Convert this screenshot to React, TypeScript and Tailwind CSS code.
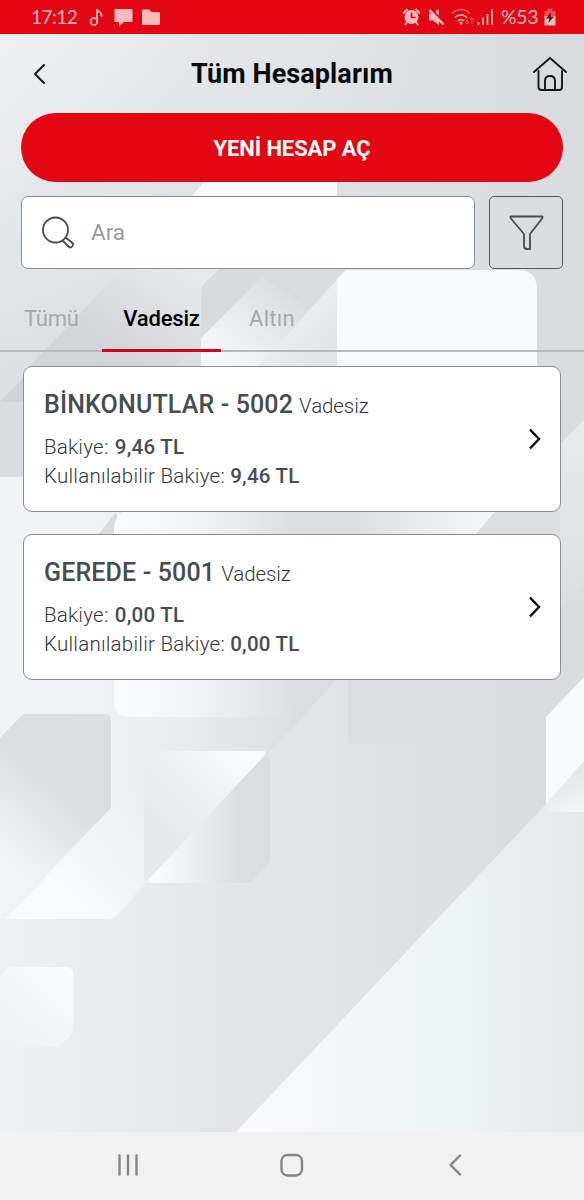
import type { ReactNode } from "react";

interface Account {
  name: string;
  type: string;
  balance: string;
  available: string;
}

const accounts: Account[] = [
  { name: "BİNKONUTLAR - 5002", type: "Vadesiz", balance: "9,46 TL", available: "9,46 TL" },
  { name: "GEREDE - 5001", type: "Vadesiz", balance: "0,00 TL", available: "0,00 TL" },
];

function Background() {
  return (
    <svg
      className="absolute inset-0 h-full w-full"
      viewBox="0 0 584 1200"
      preserveAspectRatio="none"
      aria-hidden="true"
    >
      <defs>
        <linearGradient id="base" x1="0" x2="1" y1="0" y2="0">
          <stop offset="0" stopColor="#eef1f3" />
          <stop offset="0.25" stopColor="#e6eaec" />
          <stop offset="0.6" stopColor="#dfe3e5" />
          <stop offset="0.95" stopColor="#d9dcdf" />
        </linearGradient>
        <linearGradient id="topShade" x1="0" x2="0" y1="0" y2="1">
          <stop offset="0" stopColor="#d9dddf" stopOpacity="0" />
          <stop offset="1" stopColor="#d9dddf" stopOpacity="0.9" />
        </linearGradient>
        <linearGradient id="leftGlow" gradientUnits="userSpaceOnUse" x1="60" x2="310" y1="0" y2="0">
          <stop offset="0" stopColor="#eff3f5" />
          <stop offset="0.35" stopColor="#ebeff1" />
          <stop offset="1" stopColor="#dadee0" />
        </linearGradient>
        <linearGradient id="triangle" gradientUnits="userSpaceOnUse" x1="236" x2="584" y1="0" y2="0">
          <stop offset="0" stopColor="#f9fafc" />
          <stop offset="0.6" stopColor="#eef3f5" />
          <stop offset="1" stopColor="#e5e8ea" />
        </linearGradient>
        <linearGradient id="whiteFade" gradientUnits="userSpaceOnUse" x1="114" x2="300" y1="0" y2="0">
          <stop offset="0" stopColor="#fafbfd" />
          <stop offset="0.4" stopColor="#f2f5f6" />
          <stop offset="1" stopColor="#dadee0" />
        </linearGradient>
        <linearGradient id="hex" gradientUnits="userSpaceOnUse" x1="62" y1="790" x2="5" y2="855">
          <stop offset="0" stopColor="#dadee0" />
          <stop offset="1" stopColor="#f0f4f5" />
        </linearGradient>
        <linearGradient id="strip" gradientUnits="userSpaceOnUse" x1="70" y1="890" x2="150" y2="810">
          <stop offset="0" stopColor="#f8fafb" />
          <stop offset="1" stopColor="#f0f4f6" stopOpacity="0" />
        </linearGradient>
        <linearGradient id="squareLight" gradientUnits="userSpaceOnUse" x1="250" y1="750" x2="165" y2="835">
          <stop offset="0" stopColor="#fbfcfd" />
          <stop offset="0.5" stopColor="#edf1f4" />
          <stop offset="1" stopColor="#e5e8ea" />
        </linearGradient>
        <linearGradient id="squareDark" gradientUnits="userSpaceOnUse" x1="155" x2="240" y1="0" y2="0">
          <stop offset="0" stopColor="#fafbfc" />
          <stop offset="1" stopColor="#dadee0" />
        </linearGradient>
        <linearGradient id="chip" x1="1" y1="0" x2="0.2" y2="1">
          <stop offset="0" stopColor="#fafbfc" />
          <stop offset="1" stopColor="#edf1f2" />
        </linearGradient>
        <linearGradient id="band" gradientUnits="userSpaceOnUse" x1="190" y1="270" x2="130" y2="360">
          <stop offset="0" stopColor="#e7eaec" />
          <stop offset="1" stopColor="#d3d6d9" />
        </linearGradient>
        <linearGradient id="ray" gradientUnits="userSpaceOnUse" x1="225" y1="366" x2="290" y2="290">
          <stop offset="0" stopColor="#f5f7f9" />
          <stop offset="0.5" stopColor="#e8ebed" />
          <stop offset="1" stopColor="#d9dddf" />
        </linearGradient>
        <linearGradient id="wing" gradientUnits="userSpaceOnUse" x1="270" y1="300" x2="337" y2="366">
          <stop offset="0" stopColor="#edf1f3" />
          <stop offset="1" stopColor="#dfe3e5" />
        </linearGradient>
        <linearGradient id="gap" gradientUnits="userSpaceOnUse" x1="346" x2="495" y1="0" y2="0">
          <stop offset="0" stopColor="#dadee0" />
          <stop offset="1" stopColor="#f5f8fa" />
        </linearGradient>
        <linearGradient id="edge" x1="0" x2="0" y1="0" y2="1">
          <stop offset="0" stopColor="#e8ebee" />
          <stop offset="1" stopColor="#dbdfe1" />
        </linearGradient>
        <linearGradient id="cornerLow" gradientUnits="userSpaceOnUse" x1="560" y1="780" x2="575" y2="812">
          <stop offset="0" stopColor="#e2e7e9" />
          <stop offset="1" stopColor="#f3f6f8" />
        </linearGradient>
      </defs>

      <rect width="584" height="1200" fill="url(#base)" />
      <rect y="34" width="584" height="368" fill="url(#topShade)" />

      {/* shapes behind the search field and the tabs */}
      <path d="M206 180H337V200H188Z" fill="#f7f9fb" />
      <path d="M123 268H220L201 287V340L175 368H28Z" fill="url(#band)" />
      <path d="M35 366H120V402H0Z" fill="#cfd3d6" />
      <path d="M0 402H60V477H0Z" fill="#d9dde0" />
      <path d="M201 287L220 268H350L250 366H201Z" fill="#d7dbdd" />
      <path d="M201 338L262 277L310 306L258 368H201Z" fill="url(#ray)" />
      <path d="M270 268H348L310 308Z" fill="#d9dddf" />
      <path d="M346 270L256 368H346Z" fill="url(#wing)" />
      <path d="M337 279L346 270H518Q537 270 537 290V380H337Z" fill="#f7f9fb" />

      {/* middle of the page */}
      <path d="M0 477H340V676L115 919H0Z" fill="url(#leftGlow)" />
      <path d="M116 512L98 535H120Z" fill="#d7dbdd" />
      <path d="M292 500H584V600H336V680L292 728Z" fill="#dadee0" />
      <path d="M114 527Q116 512 132 508H310V690L285 717H128Q114 715 114 701Z" fill="url(#whiteFade)" />
      <path d="M346 508H498L474 536H346Z" fill="url(#gap)" />
      <path d="M560 444L584 420V582L560 606Z" fill="url(#edge)" />
      <path d="M348 680H485L424 741Q421 744 416 744H353Q348 744 348 739Z" fill="#dadee0" />

      {/* lower shapes */}
      <path d="M236 1132L546 804L584 764V1132Z" fill="url(#triangle)" />
      <path d="M546 717L584 677V764L546 804Z" fill="#f7f9fb" />
      <path d="M546 804L584 761V812H554Q547 812 546 804Z" fill="url(#cornerLow)" />
      <path d="M5 919L111 809L144 776V881H147L115 916Q112 919 107 919Z" fill="url(#strip)" />
      <path d="M0 738L22 715Q24 714 26 714H104Q111 714 111 721V808L0 921Z" fill="url(#hex)" />
      <path d="M144 772Q144 766 150 761L157 754Q160 751 165 751H263Q267 751 266 754L148 881Q144 880 144 876Z" fill="url(#squareLight)" />
      <path d="M266 754Q270 755 270 760V858Q270 862 267 865L252 880Q249 883 244 883H151Q148 883 148 880Z" fill="url(#squareDark)" />
      <path d="M0 976L7 969Q9 967 13 967H66Q73 967 73 974V1028Q73 1032 70 1036L62 1044Q59 1047 54 1047H0Z" fill="url(#chip)" />
    </svg>
  );
}

function StatusBar() {
  return (
    <div className="flex h-[34px] shrink-0 items-center bg-[#e30613] text-[#f9b9bd]">
      <span className="ml-[31px] w-[47px] whitespace-nowrap font-['Lato'] text-[19px] leading-[34px] tracking-[-0.5px]">
        17:12
      </span>
      <svg className="ml-[11px]" width="72" height="22" viewBox="0 0 72 22" fill="none">
        <circle cx="5" cy="15.500" r="3.400" stroke="currentColor" strokeWidth="1.700" />
        <path d="M8 15.500V3C8.500 6 14 6 12.500 11" stroke="currentColor" strokeWidth="1.700" />
        <path d="M26 3H42Q43.500 3 43.500 4.500V16H35L30 20.500V16H25.500V4Q25.500 3 26 3Z" fill="currentColor" />
        <path d="M54 3.500H60.500L62.500 6H70Q71 6 71 7V18Q71 19 70 19H54Q53 19 53 18V4.500Q53 3.500 54 3.500Z" fill="currentColor" />
      </svg>

      <svg className="ml-auto" width="94" height="22" viewBox="0 0 94 22" fill="none">
        <circle cx="9.500" cy="11" r="7" fill="currentColor" />
        <path d="M1 7.500L5.500 3M18 7.500L13.500 3M5 16L3 19M14 16L16 19" stroke="currentColor" strokeWidth="2" />
        <path d="M9.500 6.500V11.500H13.500" stroke="#e30613" strokeWidth="1.700" />
        <path d="M27 7.500H31L37 3V19L31 14.500H27Z" fill="currentColor" />
        <path d="M29 3L43 17" stroke="#e30613" strokeWidth="2" />
        <path d="M27.500 4L41.500 18.500" stroke="currentColor" strokeWidth="2.400" />
        <path d="M50 7.500Q59 -0.500 68 7.500" stroke="currentColor" strokeOpacity="0.55" strokeWidth="1.500" />
        <path d="M53 11.500Q59 6 65 11.500M56 15Q59 12 62 15" stroke="currentColor" strokeWidth="1.600" />
        <circle cx="59" cy="17" r="1.500" fill="currentColor" />
        <path d="M65 12V18M63 16L65 18L67 16M70 18V12M68 14L70 12L72 14" stroke="currentColor" strokeOpacity="0.45" />
        <path d="M76.500 16V19M81 11.500V19M85.500 8V19M90 3V19" stroke="currentColor" strokeWidth="1.700" />
      </svg>
      <span className="ml-[5px] w-[38px] whitespace-nowrap font-['Lato'] text-[19.5px] leading-[36px] tracking-[-0.4px]">
        %53
      </span>
      <svg className="ml-[5px] mr-[28px]" width="12" height="20" viewBox="0 0 12 20">
        <path d="M3.500 1.500H8.500V4H11.500V9H0.500V4H3.500Z" fill="currentColor" fillOpacity="0.4" />
        <path d="M0.500 9H11.500V18.500H0.500Z" fill="currentColor" />
        <path d="M7 5L2 11.500H5.500L4.500 16L10 9.500H6.500Z" fill="#5a0b10" />
      </svg>
    </div>
  );
}

function Header() {
  return (
    <header className="grid h-[79px] shrink-0 grid-cols-[36px_1fr_36px] items-center pl-[33px] pr-[16px]">
      <svg width="36" height="22" viewBox="0 0 36 22" fill="none">
        <path d="M11 2L2 11L11 20" stroke="#15191c" strokeWidth="2" strokeLinecap="round" strokeLinejoin="round" />
      </svg>
      <h1 className="mr-[17px] whitespace-nowrap text-center text-[27px] font-bold leading-8 tracking-[0.1px] text-[#080a0b]">
        Tüm Hesaplarım
      </h1>
      <svg width="36" height="36" viewBox="0 0 36 36" fill="none" stroke="#15191c" strokeWidth="1.900" strokeLinecap="round" strokeLinejoin="round">
        <path d="M2 16L18 2L34 16" />
        <path d="M6.500 15V31Q6.500 34 9.500 34H27Q30 34 30 31V15" />
        <path d="M13 34V25Q13 20 18 20Q23 20 23 25V34" />
      </svg>
    </header>
  );
}

function Tab({ children, className }: { children: ReactNode; className: string }) {
  return (
    <button type="button" className={`h-[69px] whitespace-nowrap leading-none ${className}`}>
      {children}
    </button>
  );
}

function AccountCard({ account }: { account: Account }) {
  return (
    <section className="flex h-[146px] items-center justify-between rounded-[9px] border-[1.5px] border-[#8a8e90] bg-white pl-[20px] pr-[19px] text-[#454d51]">
      <div className="whitespace-nowrap">
        <div className="flex items-baseline gap-[6px] pt-px leading-[34px]">
          <h2 className="text-[25px] font-medium tracking-[0.15px]">{account.name}</h2>
          <span className="text-[20.5px] font-light tracking-[-0.1px] text-[#30383c]">{account.type}</span>
        </div>
        <p className="mt-[10px] text-[20.5px] font-light leading-[29px] tracking-[0.25px] text-[#30383c]">
          Bakiye: <span className="ml-px font-medium text-[#454d51]">{account.balance}</span>
        </p>
        <p className="pb-px text-[20.5px] font-light leading-[29px] tracking-[0.25px] text-[#30383c]">
          Kullanılabilir Bakiye: <span className="font-medium text-[#454d51]">{account.available}</span>
        </p>
      </div>
      <svg width="13" height="22" viewBox="0 0 13 22" fill="none">
        <path d="M2 1.500L11 11L2 20.500" stroke="#080a0b" strokeWidth="2.400" />
      </svg>
    </section>
  );
}

export default function App() {
  return (
    <div className="relative h-[1200px] w-[584px] overflow-hidden font-['Roboto',sans-serif]">
      <Background />
      <div className="relative flex h-full flex-col">
        <StatusBar />
        <Header />

        <div className="px-[21px]">
          <button
            type="button"
            className="flex h-[69px] w-full items-center justify-center rounded-full bg-[#e30613] pt-px text-[22px] font-bold tracking-[-0.1px] text-white"
          >
            YENİ HESAP AÇ
          </button>
        </div>

        <div className="mt-[14px] flex gap-[14px] px-[21px]">
          <label className="flex h-[73px] flex-1 items-center rounded-[7px] border-[1.5px] border-[#8a8e90] bg-white pl-[20px]">
            <svg width="33" height="33" viewBox="0 0 33 33" fill="none" stroke="#454d51" strokeWidth="1.800">
              <circle cx="13.500" cy="14" r="12.500" />
              <path d="M20.500 24.500L26.500 30.500Q28.500 32.500 30 30.500Q32 28.500 30 26.500L23.500 21.500" />
            </svg>
            <span className="ml-[16px] pt-px text-[22.5px] text-[#999b9d]">Ara</span>
          </label>
          <button
            type="button"
            className="flex h-[73px] w-[74px] items-center justify-center rounded-[5px] border-[1.5px] border-[#50585c]"
          >
            <svg width="35" height="35" viewBox="0 0 35 35" fill="none" stroke="#454d51" strokeWidth="1.800" strokeLinejoin="round">
              <path d="M1.500 1.500H33.500V3L21 19V34H18Q15 34 15 31V19L1.500 3Z" />
            </svg>
          </button>
        </div>

        <nav className="mt-[14px] flex h-[69px] border-b-[2px] border-[#b5b9bb] text-[22px]">
          <Tab className="w-[102px] pl-[24px] pt-[2px] text-left tracking-[-0.3px] text-[#a4a8aa]">Tümü</Tab>
          <Tab className="w-[119px] border-b-[3px] border-[#d0021b] pt-[5px] font-medium tracking-[-0.2px] text-black">
            Vadesiz
          </Tab>
          <Tab className="w-[102px] pt-[2px] tracking-[0.3px] text-[#a4a8aa]">Altın</Tab>
        </nav>

        <main className="mt-[14px] flex flex-1 flex-col gap-[22px] px-[23px]">
          {accounts.map((account) => (
            <AccountCard key={account.name} account={account} />
          ))}
        </main>

        <footer className="flex h-[68px] shrink-0 items-center bg-[#f1f1f1] pb-[2px] pl-[117px]">
          <svg width="346" height="24" viewBox="0 0 346 24" fill="none" stroke="#858585" strokeWidth="2.400" strokeLinecap="round" strokeLinejoin="round">
            <path d="M2.500 2.500V21.500M11 2.500V21.500M19.500 2.500V21.500" />
            <rect x="164.500" y="2" width="20.500" height="20.500" rx="6" />
            <path d="M343 2.500L333.500 12L343 21.500" />
          </svg>
        </footer>
      </div>
    </div>
  );
}
